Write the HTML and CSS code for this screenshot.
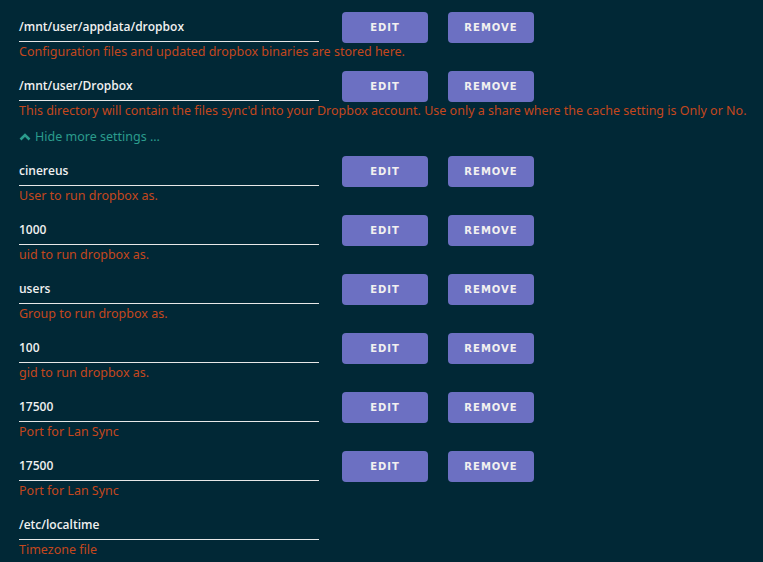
FILE: index.html
```html
<!DOCTYPE html>
<html>
	<head>
		<meta charset="UTF-8">
		<title>Dropbox settings</title>
		<link rel="stylesheet" href="styles.css">
	</head>
	<body>
		<div class="settings">
			<div class="row">
				<div class="field">
					<div class="value">/mnt/user/appdata/dropbox</div>
					<div class="desc">Configuration files and updated dropbox binaries are stored here.</div>
				</div>
				<button class="btn">EDIT</button>
				<button class="btn">REMOVE</button>
			</div>
			<div class="row">
				<div class="field">
					<div class="value">/mnt/user/Dropbox</div>
					<div class="desc">This directory will contain the files sync'd into your Dropbox account. Use only a share where the cache setting is Only or No.</div>
				</div>
				<button class="btn">EDIT</button>
				<button class="btn">REMOVE</button>
			</div>

			<div class="more">
				<svg width="12" height="8" viewBox="0 0 12 8"><polyline points="1.5,6.5 6,2 10.5,6.5" fill="none" stroke="#2b9c8d" stroke-width="2.6"/></svg>
				Hide more settings ...
			</div>

			<div class="row">
				<div class="field">
					<div class="value">cinereus</div>
					<div class="desc">User to run dropbox as.</div>
				</div>
				<button class="btn">EDIT</button>
				<button class="btn">REMOVE</button>
			</div>
			<div class="row">
				<div class="field">
					<div class="value">1000</div>
					<div class="desc">uid to run dropbox as.</div>
				</div>
				<button class="btn">EDIT</button>
				<button class="btn">REMOVE</button>
			</div>
			<div class="row">
				<div class="field">
					<div class="value">users</div>
					<div class="desc">Group to run dropbox as.</div>
				</div>
				<button class="btn">EDIT</button>
				<button class="btn">REMOVE</button>
			</div>
			<div class="row">
				<div class="field">
					<div class="value">100</div>
					<div class="desc">gid to run dropbox as.</div>
				</div>
				<button class="btn">EDIT</button>
				<button class="btn">REMOVE</button>
			</div>
			<div class="row">
				<div class="field">
					<div class="value">17500</div>
					<div class="desc">Port for Lan Sync</div>
				</div>
				<button class="btn">EDIT</button>
				<button class="btn">REMOVE</button>
			</div>
			<div class="row">
				<div class="field">
					<div class="value">17500</div>
					<div class="desc">Port for Lan Sync</div>
				</div>
				<button class="btn">EDIT</button>
				<button class="btn">REMOVE</button>
			</div>
			<div class="row">
				<div class="field">
					<div class="value">/etc/localtime</div>
					<div class="desc">Timezone file</div>
				</div>
			</div>
		</div>
	</body>
</html>
```

FILE: styles.css
```css
*{
	margin: 0;
	padding: 0;
	box-sizing: border-box;
}
body{
	background-color: #012836;
	font-family: "Noto Sans", "DejaVu Sans", sans-serif;
	height: 562px;
	overflow: hidden;
}
.settings{
	padding: 12px 0 0 19px;
}
.row{
	display: flex;
	align-items: flex-start;
	margin-bottom: 10px;
}
.field{
	width: 300px;
	flex-shrink: 0;
}
.value{
	height: 30px;
	line-height: 29px;
	border-bottom: 1px solid #e8e8e8;
	color: #f0f0f0;
	font-family: "Open Sans", "Noto Sans", sans-serif;
	font-size: 12px;
	font-weight: 600;
}
.desc{
	width: 740px;
	padding-top: 1px;
	line-height: 18px;
	font-size: 12.5px;
	color: #c4471d;
	white-space: nowrap;
}
.btn{
	width: 86px;
	height: 31px;
	margin-left: 23px;
	border: none;
	border-radius: 4px;
	background-color: #6c70c2;
	color: #f2f0f0;
	font-family: "DejaVu Sans", sans-serif;
	font-size: 10px;
	font-weight: bold;
	letter-spacing: 1px;
	cursor: pointer;
}
.btn + .btn{
	margin-left: 20px;
}
.more{
	height: 14px;
	line-height: 14px;
	margin: 1px 0 12px;
	color: #2b9c8d;
	font-size: 12.5px;
	display: flex;
	align-items: center;
	gap: 4px;
}
```
